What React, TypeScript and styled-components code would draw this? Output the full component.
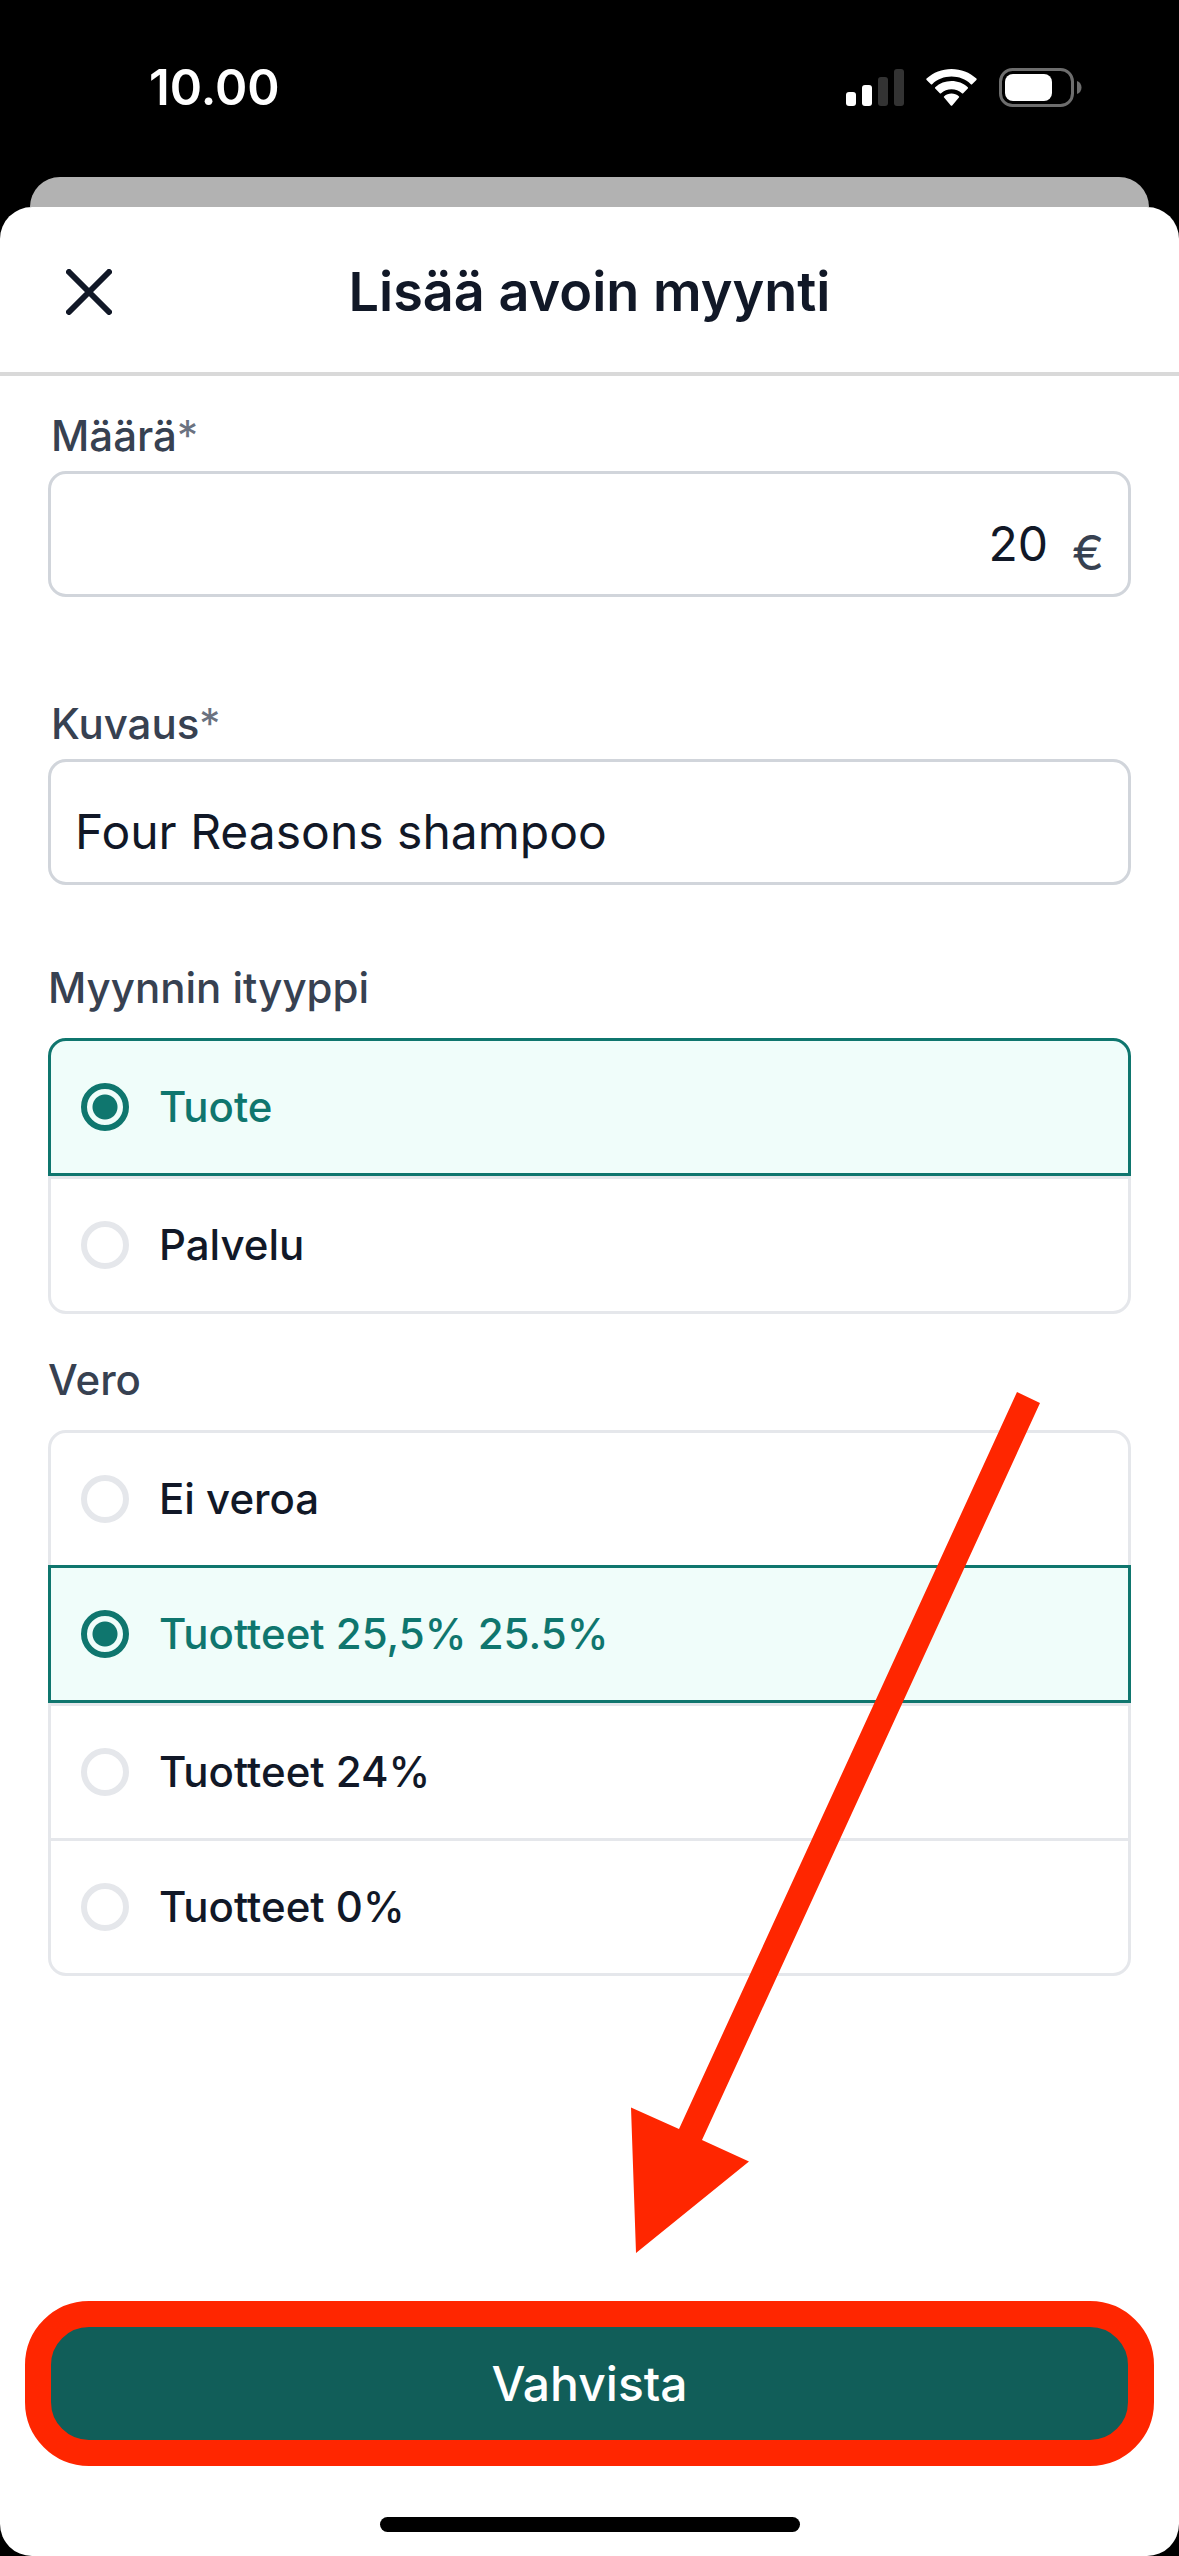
import React, { useId, useState } from "react";
import styled, { createGlobalStyle } from "styled-components";

const color = {
  ink: "#111827",
  label: "#374151",
  muted: "#6b7280",
  field: "#d1d5db",
  line: "#e5e7eb",
  teal: "#0f766e",
  tealDark: "#115e59",
  mint: "#f0fdfa",
  red: "#ff2600",
};

const GlobalStyle = createGlobalStyle`
  *, *::before, *::after { box-sizing: border-box; }
  body {
    margin: 0;
    background: #000;
    color: ${color.ink};
    font-family: Inter, Roboto, sans-serif;
  }
  button, input { font: inherit; color: inherit; }
`;

const Screen = styled.div`
  display: flex;
  flex-direction: column;
  min-height: 100vh;
  background: #000;
`;

const StatusBar = styled.header`
  display: flex;
  align-items: center;
  justify-content: space-between;
  height: 177px;
  padding: 0 97px 2px 149px;
  color: #fff;
`;

const Clock = styled.time`
  font-size: 49px;
  line-height: 60px;
  font-weight: 600;
`;

const StatusIcons = styled.div`
  display: flex;
  align-items: center;
  gap: 22px;
`;

const BackSheet = styled.div`
  height: 30px;
  margin: 0 30px;
  border-radius: 30px 30px 0 0;
  background: #b2b2b2;
`;

const Sheet = styled.main`
  display: flex;
  flex: 1;
  flex-direction: column;
  border-radius: 32px;
  background: #fff;
`;

const TitleBar = styled.div`
  display: grid;
  grid-template-columns: 81px 1fr 81px;
  align-items: center;
  height: 169px;
  padding: 4px 48px 0;
  border-bottom: 4px solid #d9d9d9;
`;

const CloseButton = styled.button`
  display: flex;
  align-items: center;
  justify-content: center;
  width: 81px;
  height: 81px;
  padding: 0;
  border: 0;
  background: none;
`;

const Title = styled.h1`
  margin: 0;
  font-size: 54px;
  line-height: 60px;
  font-weight: 600;
  text-align: center;
`;

const Form = styled.form`
  display: flex;
  flex: 1;
  flex-direction: column;
  padding: 30px 48px 24px;
`;

const Fields = styled.div`
  display: flex;
  flex-direction: column;
  gap: 97px;
  margin-bottom: 73px;
`;

const Field = styled.div`
  display: flex;
  flex-direction: column;
  gap: 5px;
`;

const FieldLabel = styled.label`
  padding-left: 3px;
  color: ${color.label};
  font-size: 42px;
  line-height: 60px;
  font-weight: 500;
`;

const Required = styled.span`
  color: ${color.muted};
  font-weight: 400;
`;

const InputBox = styled.div`
  display: flex;
  height: 126px;
  padding: 0 24px;
  border: 3px solid ${color.field};
  border-radius: 18px;
  font-size: 48px;
`;

const TextInput = styled.input<{ $end?: boolean }>`
  flex: 1;
  min-width: 0;
  padding: 18px 0 0;
  border: 0;
  outline: 0;
  background: none;
  text-align: ${(p) => (p.$end ? "right" : "left")};
`;

const Suffix = styled.span`
  padding: 52px 0 0 24px;
  color: ${color.label};
  line-height: 54px;
`;

const Group = styled.fieldset`
  min-width: 0;
  margin: 0 0 36px;
  padding: 0;
  border: 0;
`;

const Legend = styled.legend`
  margin-bottom: 20px;
  padding: 0;
  color: ${color.label};
  font-size: 42px;
  line-height: 60px;
  font-weight: 500;
`;

const Option = styled.label<{ $selected: boolean; $afterSelected: boolean }>`
  position: relative;
  z-index: ${(p) => (p.$selected ? 1 : 0)};
  display: flex;
  align-items: center;
  gap: 30px;
  height: 138px;
  margin-top: ${(p) => (p.$afterSelected ? 0 : -3)}px;
  padding: 0 30px;
  border: 3px solid ${(p) => (p.$selected ? color.teal : color.line)};
  background: ${(p) => (p.$selected ? color.mint : "#fff")};
  color: ${(p) => (p.$selected ? color.teal : color.ink)};
  font-size: 42px;
  line-height: 60px;
  font-weight: 500;

  &:first-of-type {
    margin-top: 0;
    border-top-left-radius: 18px;
    border-top-right-radius: 18px;
  }
  &:last-of-type {
    border-bottom-left-radius: 18px;
    border-bottom-right-radius: 18px;
  }
`;

const Radio = styled.input`
  appearance: none;
  flex: none;
  width: 48px;
  height: 48px;
  margin: 0;
  border: 6px solid ${color.line};
  border-radius: 50%;
  background: #fff;

  &:checked {
    border-color: ${color.teal};
    background: radial-gradient(circle, ${color.teal} 12px, transparent 13px);
  }
`;

const Footer = styled.div`
  position: relative;
  margin-top: auto;
`;

const ConfirmButton = styled.button`
  display: block;
  width: 100%;
  height: 119px;
  padding: 0;
  border: 0;
  border-radius: 18px;
  background: ${color.tealDark};
  color: #fff;
  font-size: 48px;
  line-height: 60px;
  font-weight: 500;
`;

const Highlight = styled.div`
  position: absolute;
  inset: -23px;
  border: 26px solid ${color.red};
  border-radius: 64px;
  pointer-events: none;
`;

const Pointer = styled.svg`
  position: absolute;
  right: 91px;
  bottom: 190px;
  z-index: 2;
  pointer-events: none;
`;

const HomeIndicator = styled.div`
  width: 420px;
  height: 15px;
  margin: 74px auto 0;
  border-radius: 8px;
  background: #000;
`;

const SignalIcon = () => (
  <svg width="58" height="38" viewBox="0 0 58 38" aria-hidden="true">
    <rect x="0" y="23" width="10" height="14" rx="3" fill="#fff" />
    <rect x="16" y="16" width="10" height="21" rx="3" fill="#fff" />
    <rect x="32" y="8" width="10" height="29" rx="3" fill="#333" />
    <rect x="48" y="0" width="10" height="37" rx="3" fill="#333" />
  </svg>
);

const WifiIcon = () => (
  <svg width="51" height="38" viewBox="0 0 51 38" fill="#fff" aria-hidden="true">
    <path d="M.6 10.900a.9.900 0 0 1 0-1.300C7.300 3.400 16 0 25.500 0s18.200 3.400 24.900 9.600c.4.400.4.900 0 1.300l-4.300 4.300c-.4.400-.9.400-1.300 0-5.200-4.900-12-7.600-19.300-7.600S11.400 10.300 6.200 15.200c-.4.400-.9.400-1.300 0Z" />
    <path d="M9.200 19.600a.9.900 0 0 1 0-1.300c4.400-4.100 10.200-6.300 16.300-6.300s11.900 2.200 16.300 6.300c.4.400.4.900 0 1.300l-4.600 4.600c-.4.400-.9.400-1.300 0-2.800-2.500-6.500-3.900-10.400-3.900s-7.600 1.400-10.400 3.900c-.4.400-.9.400-1.300 0Z" />
    <path d="M18.100 28.600a.9.900 0 0 1 .1-1.400c2-1.700 4.600-2.600 7.300-2.600s5.300.9 7.300 2.600c.4.400.5 1 .1 1.400l-6.700 7.900c-.4.400-1 .4-1.400 0Z" />
  </svg>
);

const BatteryIcon = () => (
  <svg width="83" height="39" viewBox="0 0 83 39" aria-hidden="true">
    <rect x="1.500" y="1.500" width="72" height="36" rx="12" fill="none" stroke="#6d6d6d" strokeWidth="3" />
    <rect x="6" y="6" width="47" height="27" rx="8" fill="#fff" />
    <path d="M78 13c3 1 4.500 3.600 4.500 6.500S81 25 78 26Z" fill="#6d6d6d" />
  </svg>
);

const CloseIcon = () => (
  <svg width="46" height="46" viewBox="0 0 46 46" aria-hidden="true">
    <path d="M3 3 43 43M43 3 3 43" fill="none" stroke={color.ink} strokeWidth="6" strokeLinecap="round" />
  </svg>
);

type Choice = { value: string; text: string };

const saleTypes: Choice[] = [
  { value: "product", text: "Tuote" },
  { value: "service", text: "Palvelu" },
];

const taxes: Choice[] = [
  { value: "none", text: "Ei veroa" },
  { value: "25.5", text: "Tuotteet 25,5% 25.5%" },
  { value: "24", text: "Tuotteet 24%" },
  { value: "0", text: "Tuotteet 0%" },
];

type ChoiceGroupProps = { title: string; choices: Choice[]; initial: string };

const ChoiceGroup = ({ title, choices, initial }: ChoiceGroupProps) => {
  const name = useId();
  const [value, setValue] = useState(initial);
  return (
    <Group>
      <Legend>{title}</Legend>
      {choices.map((c, i) => (
        <Option
          key={c.value}
          $selected={c.value === value}
          $afterSelected={i > 0 && choices[i - 1].value === value}
        >
          <Radio
            type="radio"
            name={name}
            value={c.value}
            checked={c.value === value}
            onChange={() => setValue(c.value)}
          />
          {c.text}
        </Option>
      ))}
    </Group>
  );
};

type TextFieldProps = { label: string; initial: string; suffix?: string };

const TextField = ({ label, initial, suffix }: TextFieldProps) => {
  const id = useId();
  const [value, setValue] = useState(initial);
  return (
    <Field>
      <FieldLabel htmlFor={id}>
        {label}
        <Required>*</Required>
      </FieldLabel>
      <InputBox>
        <TextInput
          id={id}
          type="text"
          required
          $end={Boolean(suffix)}
          value={value}
          onChange={(e) => setValue(e.target.value)}
        />
        {suffix && <Suffix>{suffix}</Suffix>}
      </InputBox>
    </Field>
  );
};

export default function App() {
  return (
    <>
      <GlobalStyle />
      <Screen>
        <StatusBar>
          <Clock>10.00</Clock>
          <StatusIcons>
            <SignalIcon />
            <WifiIcon />
            <BatteryIcon />
          </StatusIcons>
        </StatusBar>
        <BackSheet />
        <Sheet>
          <TitleBar>
            <CloseButton type="button" aria-label="Sulje">
              <CloseIcon />
            </CloseButton>
            <Title>Lisää avoin myynti</Title>
          </TitleBar>
          <Form onSubmit={(e) => e.preventDefault()}>
            <Fields>
              <TextField label="Määrä" initial="20" suffix="€" />
              <TextField label="Kuvaus" initial="Four Reasons shampoo" />
            </Fields>
            <ChoiceGroup title="Myynnin ityyppi" choices={saleTypes} initial="product" />
            <ChoiceGroup title="Vero" choices={taxes} initial="25.5" />
            <Footer>
              <ConfirmButton type="submit">Vahvista</ConfirmButton>
              <Highlight />
              <Pointer width="409" height="861" viewBox="0 0 409 861" aria-hidden="true">
                <path d="M386 0 409 11 71 748 118 769.500 5 861 0 715.500 48 737Z" fill={color.red} />
              </Pointer>
            </Footer>
            <HomeIndicator />
          </Form>
        </Sheet>
      </Screen>
    </>
  );
}
